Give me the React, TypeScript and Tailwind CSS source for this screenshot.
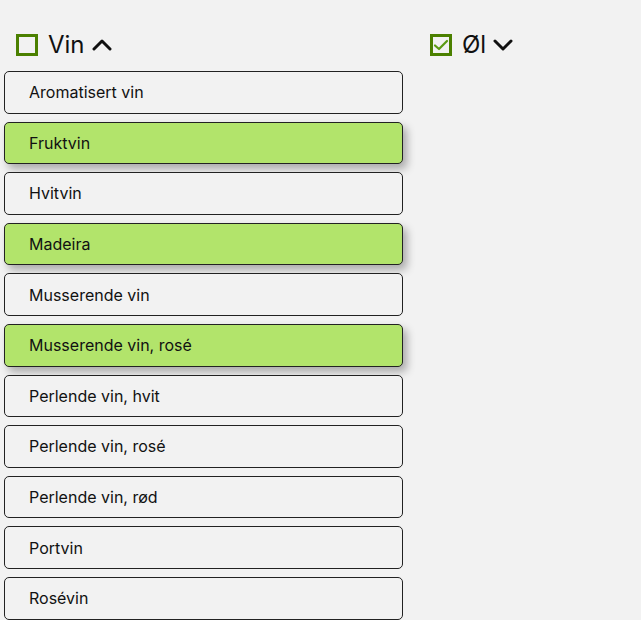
const wines = [
  { name: "Aromatisert vin", on: false },
  { name: "Fruktvin", on: true },
  { name: "Hvitvin", on: false },
  { name: "Madeira", on: true },
  { name: "Musserende vin", on: false },
  { name: "Musserende vin, rosé", on: true },
  { name: "Perlende vin, hvit", on: false },
  { name: "Perlende vin, rosé", on: false },
  { name: "Perlende vin, rød", on: false },
  { name: "Portvin", on: false },
  { name: "Rosévin", on: false },
]

function Box({ checked }: { checked?: boolean }) {
  return (
    <span className="w-[22px] h-[22px] border-[3px] border-[#4b8000] flex items-center justify-center shrink-0">
      {checked && (
        <svg width="16" height="16" viewBox="0 0 16 16" fill="none">
          <path d="M2 8.5l4 3.5 8-8" stroke="#5a9a12" strokeWidth="2.2" strokeLinecap="round" strokeLinejoin="round" />
        </svg>
      )}
    </span>
  )
}

function Chevron({ up }: { up?: boolean }) {
  return (
    <svg width="20" height="14" viewBox="0 0 20 14" fill="none" className="ml-[7px]">
      <path
        d={up ? "M2 11l8-8 8 8" : "M2 3l8 8 8-8"}
        stroke="#111"
        strokeWidth="3"
        strokeLinecap="round"
        strokeLinejoin="round"
      />
    </svg>
  )
}

export default function App() {
  return (
    <div className="min-h-screen bg-[#f2f2f2] font-['Inter',sans-serif] text-[#111] overflow-hidden">
      <div className="flex gap-[15px] pl-[4px] pt-[33px]">
        <div className="w-[399px] shrink-0">
          <div className="flex items-center pl-[12px] h-[24px] mb-[14px]">
            <Box />
            <span className="ml-[10px] text-[24px] leading-none">Vin</span>
            <Chevron up />
          </div>
          <div className="flex flex-col gap-[8px]">
            {wines.map((w) => (
              <div
                key={w.name}
                className={
                  w.on
                    ? "h-[42.6px] flex items-center pl-[24px] rounded-[5px] border border-[#222] bg-[#b2e46b] shadow-[4px_5px_8px_rgba(0,0,0,0.3)] text-[16px]"
                    : "h-[42.6px] flex items-center pl-[24px] rounded-[5px] border border-[#222] bg-[#f2f2f2] text-[16px]"
                }
              >
                {w.name}
              </div>
            ))}
          </div>
        </div>
        <div className="flex-1">
          <div className="flex items-center pl-[12px] h-[24px]">
            <Box checked />
            <span className="ml-[10px] text-[24px] leading-none">Øl</span>
            <Chevron />
          </div>
        </div>
      </div>
    </div>
  )
}
